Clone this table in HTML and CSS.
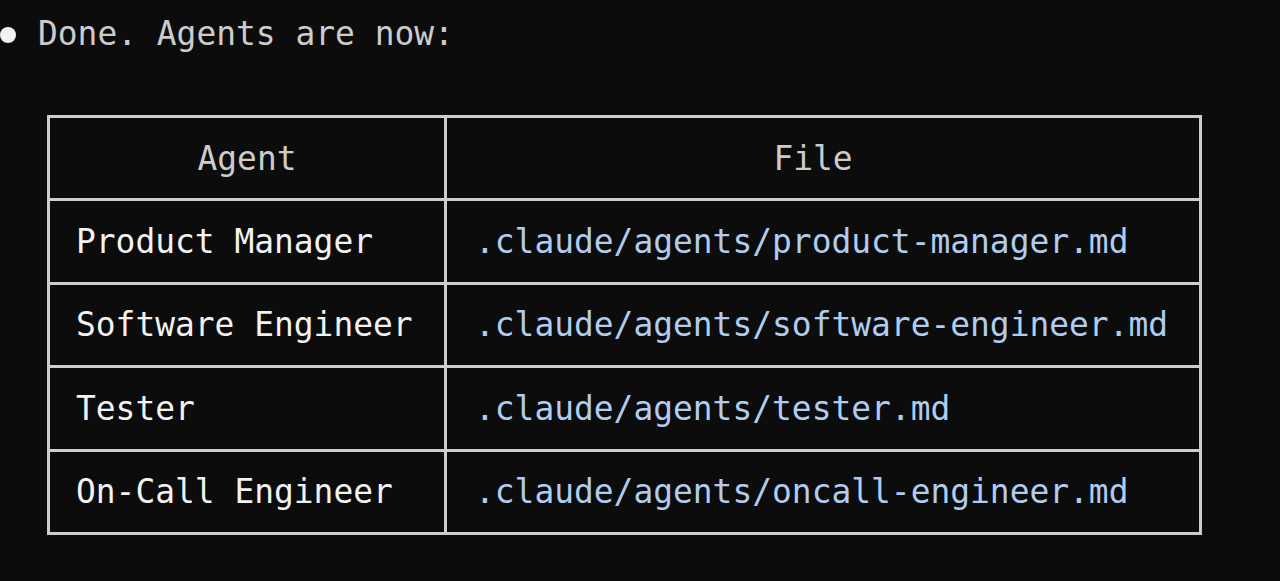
FILE: index.html
```html
<!DOCTYPE html>
<html lang="en">
<head>
    <meta charset="UTF-8">
    <meta name="viewport" content="width=device-width, initial-scale=1.0">
    <title>Agents</title>
    <link rel="stylesheet" href="styles.css">
</head>
<body>
    <div class="message">
        <span class="bullet"></span>
        <span class="message-text">Done. Agents are now:</span>
    </div>

    <div class="agent-table">
        <div class="cell head">Agent</div>
        <div class="cell head head-file">File</div>

        <div class="cell name">Product Manager</div>
        <div class="cell path">.claude/agents/product-manager.md</div>

        <div class="cell name">Software Engineer</div>
        <div class="cell path">.claude/agents/software-engineer.md</div>

        <div class="cell name">Tester</div>
        <div class="cell path">.claude/agents/tester.md</div>

        <div class="cell name">On-Call Engineer</div>
        <div class="cell path">.claude/agents/oncall-engineer.md</div>
    </div>
</body>
</html>
```

FILE: styles.css
```css
body {
    margin: 0;
    background-color: #0c0c0c;
    font-family: "DejaVu Sans Mono", "Liberation Mono", monospace;
    font-size: 32.9px;
    color: #cccccc;
    min-height: 100vh;
}

.message {
    display: flex;
    align-items: center;
    height: 40px;
    margin-top: 13px;
}

.bullet {
    width: 16px;
    height: 16px;
    border-radius: 50%;
    background-color: #f2f2f2;
    margin-right: 22px;
    margin-top: 3px;
}

.message-text {
    color: #cccccc;
}

/* table drawn as a grid: line colour shows through the gaps */
.agent-table {
    display: grid;
    grid-template-columns: 394px 752px;
    grid-auto-rows: 80.4px;
    gap: 3px;
    padding: 3px;
    width: max-content;
    margin: 62px 0 0 47px;
    background-color: #cdcdcd;
}

.cell {
    background-color: #0c0c0c;
    display: flex;
    align-items: center;
    white-space: pre;
}

.head {
    justify-content: center;
    color: #cccccc;
}

.head-file {
    padding-right: 20px;
}

.name {
    padding-left: 26px;
    color: #f2f2f2;
}

.path {
    padding-left: 28px;
    color: #b0cdef;
}
```
